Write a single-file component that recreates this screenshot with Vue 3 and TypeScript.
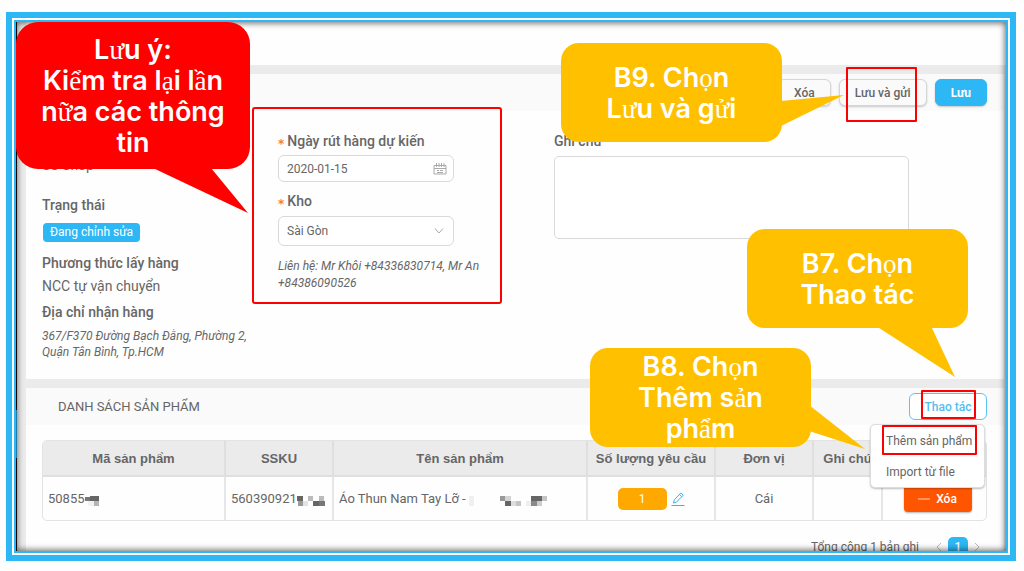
<script setup lang="ts">
import { ref } from 'vue'

interface Run { text: string; serif: boolean }
interface Callout { id: string; lines: string[]; tail: string }
interface Px { x: number; y: number; w: number; h: number; c: string }

const callouts: Callout[] = [
  { id: 'note', lines: ['Lưu ý:', 'Kiểm tra lại lần', 'nữa các thông', 'tin'], tail: '137,146 195,146 232,191' },
  { id: 'b9', lines: ['B9. Chọn', 'Lưu và gửi'], tail: '220,58 220,83 283,52' },
  { id: 'b7', lines: ['B7. Chọn', 'Thao tác'], tail: '129,97 184,97 208,148' },
  { id: 'b8', lines: ['B8. Chọn', 'Thêm sản', 'phẩm'], tail: '219,57 219,83 275,101' }
]

const marks: string[] = ['around-form', 'around-send', 'around-action', 'around-item']

function runs(line: string): Run[] {
  return line
    .split(/([ưểạầữọửảẩ]+)/)
    .filter((t) => t.length > 0)
    .map((text) => ({ text, serif: /^[ưểạầữọửảẩ]/.test(text) }))
}

const maskCode: Px[] = [
  { x: 0, y: 1, w: 5, h: 4, c: '#777' }, { x: 5, y: 0, w: 9, h: 5, c: '#666' },
  { x: 9, y: 5, w: 5, h: 5, c: '#b5b5b5' }, { x: 3, y: 5, w: 6, h: 5, c: '#f2f2f2' }
]
const maskSku: Px[] = [
  { x: 0, y: 0, w: 6, h: 5, c: '#666' }, { x: 1, y: 5, w: 5, h: 5, c: '#999' },
  { x: 6, y: 5, w: 5, h: 5, c: '#e3e3e3' }, { x: 11, y: 0, w: 5, h: 5, c: '#bbb' },
  { x: 16, y: 5, w: 6, h: 5, c: '#666' }, { x: 22, y: 0, w: 5, h: 5, c: '#bbb' },
  { x: 22, y: 5, w: 6, h: 5, c: '#777' }
]
const maskName: Px[] = [
  { x: 0, y: 0, w: 5, h: 10, c: '#f0f0f0' }, { x: 31, y: 0, w: 5, h: 5, c: '#999' },
  { x: 36, y: 0, w: 6, h: 5, c: '#d5d5d5' }, { x: 36, y: 5, w: 6, h: 5, c: '#666' },
  { x: 42, y: 5, w: 5, h: 5, c: '#ddd' }, { x: 47, y: 5, w: 5, h: 5, c: '#c4c4c4' },
  { x: 57, y: 5, w: 5, h: 5, c: '#eee' }, { x: 62, y: 0, w: 11, h: 5, c: '#666' },
  { x: 62, y: 5, w: 6, h: 5, c: '#888' }, { x: 68, y: 5, w: 5, h: 5, c: '#ccc' },
  { x: 73, y: 0, w: 5, h: 5, c: '#c4c4c4' }
]

const date = ref('2020-01-15')
const warehouse = ref('Sài Gòn')
const note = ref('')
</script>

<template>
  <div class="frame">
    <div class="screen">
      <header class="topbar"></header>
      <main class="content">
        <section class="card">
          <div class="bar">
            <button type="button" class="btn">Xóa</button>
            <button type="button" class="btn">Lưu và gửi</button>
            <button type="button" class="btn primary">Lưu</button>
          </div>
          <form class="form" @submit.prevent>
            <div class="info">
              <p class="shop">SS Shop</p>
              <h3 class="label">Trạng thái</h3>
              <span class="tag">Đang chỉnh sửa</span>
              <h3 class="label">Phương thức lấy hàng</h3>
              <p class="value">NCC tự vận chuyển</p>
              <h3 class="label">Địa chỉ nhận hàng</h3>
              <p class="small">367/F370 Đường Bạch Đằng, Phường 2, Quận Tân Bình, Tp.HCM</p>
            </div>
            <div class="fields">
              <label class="label" for="date"><span class="req">*</span>Ngày rút hàng dự kiến</label>
              <div class="control">
                <input id="date" v-model="date" type="text" />
                <svg class="cal" viewBox="0 0 14 12" width="14" height="12" fill="none" stroke="#aaa">
                  <path d="M1 2.5h12v8.5H1zM1 5.5h12M3.5 0v4M6 0v4M8.5 0v4M11 0v4M4 7.500h2M7 7.500h3M4 9.500h6" />
                </svg>
              </div>
              <label class="label" for="warehouse"><span class="req">*</span>Kho</label>
              <div class="control tall">
                <select id="warehouse" v-model="warehouse"><option>Sài Gòn</option></select>
                <svg class="chev" viewBox="0 0 10 6" width="10" height="6" fill="none" stroke="#aaa">
                  <path d="M1 .5l4 4.500 4-4.500" />
                </svg>
              </div>
              <p class="small contact">Liên hệ: Mr Khôi +84336830714, Mr An +84386090526</p>
            </div>
            <div class="notes">
              <label class="label" for="note">Ghi chú</label>
              <textarea id="note" v-model="note"></textarea>
            </div>
          </form>
        </section>

        <section class="card list">
          <div class="bar">
            <h2>DANH SÁCH SẢN PHẨM</h2>
            <div class="dropdown">
              <button type="button" class="btn action">Thao tác</button>
              <div class="menu">
                <button type="button">Thêm sản phẩm</button>
                <button type="button">Import từ file</button>
              </div>
            </div>
          </div>
          <div class="body">
            <table>
              <colgroup>
                <col class="c-code" /><col class="c-sku" /><col class="c-name" /><col class="c-qty" />
                <col class="c-unit" /><col class="c-note" /><col class="c-act" />
              </colgroup>
              <thead>
                <tr>
                  <th>Mã sản phẩm</th><th>SSKU</th><th>Tên sản phẩm</th><th>Số lượng yêu cầu</th>
                  <th>Đơn vị</th><th>Ghi chú</th><th></th>
                </tr>
              </thead>
              <tbody>
                <tr>
                  <td>50855<svg width="14" height="10"><rect v-for="(p, i) in maskCode" :key="i" :x="p.x" :y="p.y" :width="p.w" :height="p.h" :fill="p.c" /></svg></td>
                  <td>560390921<svg width="28" height="10"><rect v-for="(p, i) in maskSku" :key="i" :x="p.x" :y="p.y" :width="p.w" :height="p.h" :fill="p.c" /></svg></td>
                  <td>Áo Thun Nam Tay Lỡ - <svg width="78" height="10"><rect v-for="(p, i) in maskName" :key="i" :x="p.x" :y="p.y" :width="p.w" :height="p.h" :fill="p.c" /></svg></td>
                  <td>
                    <div class="qty">
                      <span class="count">1</span>
                      <button type="button" class="edit" aria-label="Sửa">
                        <svg viewBox="0 0 14 14" width="14" height="14" fill="none" stroke="#2db7f5">
                          <path d="M.5 13.500h13M2.500 11l.8-3.200L9.800 1l2.400 2.200-6.700 6.900zM8.400 2.500l2.300 2.200" />
                        </svg>
                      </button>
                    </div>
                  </td>
                  <td class="mid">Cái</td>
                  <td></td>
                  <td class="mid">
                    <button type="button" class="remove">
                      <svg viewBox="0 0 12 2" width="12" height="2"><path d="M0 1h12" stroke="#ffd2bb" /></svg>Xóa
                    </button>
                  </td>
                </tr>
              </tbody>
            </table>
            <nav class="pager">
              <span>Tổng cộng 1 bản ghi</span>
              <button type="button" class="arrow" aria-label="Trước">
                <svg viewBox="0 0 6 10" width="6" height="10" fill="none" stroke="#bbb"><path d="M5 1L1 5l4 4" /></svg>
              </button>
              <button type="button" class="page">1</button>
              <button type="button" class="arrow" aria-label="Sau">
                <svg viewBox="0 0 6 10" width="6" height="10" fill="none" stroke="#bbb"><path d="M1 1l4 4-4 4" /></svg>
              </button>
            </nav>
          </div>
        </section>
      </main>
      <div class="edge"></div>
      <div v-for="m in marks" :key="m" class="mark" :class="m"></div>
      <div v-for="c in callouts" :key="c.id" class="callout" :class="c.id">
        <svg class="tail" width="1" height="1"><polygon :points="c.tail" /></svg>
        <div v-for="line in c.lines" :key="line" class="line"><span v-for="(r, i) in runs(line)" :key="i" :class="{ serif: r.serif }">{{ r.text }}</span></div>
      </div>
    </div>
  </div>
</template>

<style>
body {
  margin: 0;
  background: #fefefe;
}
</style>

<style scoped>
* {
  box-sizing: border-box;
}
.frame {
  height: calc(100vh - 22px);
  margin: 12px 8px 10px 6px;
  padding: 2px;
  border: 6px solid #2db7f5;
  background: #fff;
  font-family: Roboto, "Liberation Sans", sans-serif;
  color: #666;
}
.screen {
  position: relative;
  height: 100%;
  border: 2px solid #2db7f5;
  overflow: hidden;
  background: #ebebeb;
}
.topbar {
  height: 43px;
  margin-left: 10px;
  background: #fefefe;
}
.content {
  padding: 9px 2px 0 10px;
}
.card {
  background: #fefefe;
}
.list {
  margin-top: 9px;
}
.bar {
  display: flex;
  align-items: center;
  justify-content: flex-end;
  gap: 8px;
  height: 37px;
  padding: 0 17px 0 16px;
  background: #fafafa;
}
.list .bar {
  justify-content: space-between;
}
h2 {
  margin: 0 0 0 16px;
  font-size: 13px;
  font-weight: 400;
}
.btn {
  height: 27px;
  padding: 0 15px;
  border: 1px solid #d6d6d6;
  border-radius: 6px;
  background: #fafafa;
  box-shadow: 0 1px 2px rgba(0, 0, 0, 0.2);
  font: 500 12px Roboto, sans-serif;
  color: #666;
  white-space: nowrap;
}
.btn.primary {
  min-width: 52px;
  border-color: #2db7f5;
  background: #2db7f5;
  font-weight: 700;
  color: #fff;
}
.btn.action {
  width: 78px;
  padding: 0;
  border-color: #5bc5f2;
  background: #fff;
  box-shadow: none;
  color: #4fc0f2;
}
.form {
  display: grid;
  grid-template-columns: 236fr 276fr 433fr;
  height: 268px;
  padding: 20px 17px 0 16px;
}
.label {
  display: block;
  margin: 0;
  font-size: 14px;
  font-weight: 500;
  line-height: 20px;
}
.req {
  margin-right: 3px;
  font: 700 12px/12px "DejaVu Sans", sans-serif;
  color: #ff7a33;
  vertical-align: -2px;
}
.shop {
  margin: 24px 0 20px;
  font-size: 14px;
  line-height: 20px;
}
.tag {
  display: inline-block;
  height: 19px;
  margin: 8px 0 11px 1px;
  padding: 0 7px;
  border-radius: 4px;
  background: #2db7f5;
  font-size: 12px;
  line-height: 19px;
  color: #fff;
  vertical-align: top;
}
.value {
  margin: 3px 0 6px;
  font-size: 14px;
  line-height: 20px;
}
.small {
  width: 212px;
  margin: 6px 0 0;
  font-size: 12px;
  font-style: italic;
  line-height: 16px;
}
.small.contact {
  margin-top: 12px;
  line-height: 17px;
}
.control {
  position: relative;
  width: 176px;
  margin: 4px 0 9px;
}
.control.tall {
  margin: 5px 0 0;
}
input,
select {
  display: block;
  width: 100%;
  height: 27px;
  padding: 0 28px 0 8px;
  border: 1px solid #d9d9d9;
  border-radius: 6px;
  background: #fff;
  font: 12px Roboto, sans-serif;
  color: #666;
  appearance: none;
}
select {
  height: 30px;
}
.cal {
  position: absolute;
  right: 7px;
  top: 8px;
}
.chev {
  position: absolute;
  right: 10px;
  top: 12px;
}
textarea {
  display: block;
  width: 82%;
  height: 83px;
  margin-top: 5px;
  border: 1px solid #d9d9d9;
  border-radius: 5px;
  background: #fff;
  resize: none;
}
.dropdown {
  position: relative;
}
.menu {
  position: absolute;
  top: 31px;
  right: 2px;
  z-index: 1;
  width: 115px;
  border: 1px solid #ddd;
  border-radius: 5px;
  background: #fff;
  box-shadow: 0 1px 2px rgba(0, 0, 0, 0.25);
}
.menu button {
  display: block;
  width: 100%;
  height: 31px;
  padding: 0 15px;
  border: 0;
  background: none;
  font: 12px Roboto, sans-serif;
  color: #666;
  text-align: left;
  white-space: nowrap;
}
.body {
  padding: 15px 17px 0 16px;
}
table {
  width: 100%;
  table-layout: fixed;
  border: 1px solid #e3e3e3;
  border-radius: 5px;
  border-collapse: separate;
  border-spacing: 0;
  font-size: 13px;
  overflow: hidden;
}
.c-code { width: 183px; }
.c-sku { width: 108px; }
.c-name { width: 254px; }
.c-qty { width: 128px; }
.c-unit { width: 98px; }
.c-note { width: 69px; }
.c-act { width: 103px; }
th {
  height: 36px;
  padding: 0;
  border-right: 2px solid #dfdfdf;
  border-bottom: 2px solid #dfdfdf;
  background: #ebebeb;
  font-family: "Liberation Sans", sans-serif;
  font-weight: 700;
}
td {
  height: 43px;
  padding: 0 5px;
  border-right: 2px solid #e6e6e6;
  white-space: nowrap;
}
th:last-child,
td:last-child {
  border-right: 0;
}
td > svg {
  vertical-align: -3px;
}
.mid {
  text-align: center;
}
.qty {
  display: flex;
  align-items: center;
  justify-content: center;
  gap: 4px;
}
.count {
  width: 49px;
  height: 22px;
  border-radius: 5px;
  background: #ffa800;
  font-size: 12px;
  line-height: 22px;
  text-align: center;
  color: #fff;
}
.edit {
  display: flex;
  padding: 0;
  border: 0;
  background: none;
}
.remove {
  display: inline-flex;
  align-items: center;
  justify-content: center;
  gap: 6px;
  width: 68px;
  height: 27px;
  margin-left: 6px;
  border: 0;
  border-radius: 4px;
  background: #ff5500;
  box-shadow: 0 1px 2px rgba(0, 0, 0, 0.3);
  font: 500 12px Roboto, sans-serif;
  color: #fff;
  vertical-align: middle;
}
.pager {
  display: flex;
  align-items: center;
  justify-content: flex-end;
  padding: 16px 4px 20px 0;
  font-size: 12px;
}
.pager span {
  margin-right: 14px;
}
.pager button {
  display: flex;
  align-items: center;
  justify-content: center;
  height: 20px;
  padding: 0;
  border: 0;
  background: none;
}
.pager .arrow {
  width: 12px;
}
.pager .page {
  width: 20px;
  margin: 0 3px;
  border-radius: 5px;
  background: #2db7f5;
  font: 500 12px Roboto, sans-serif;
  color: #fff;
}
.edge {
  position: absolute;
  inset: 0;
  background: linear-gradient(#000 388px, #2db7f5 388px 436px, #000 436px) left / 1px 100% no-repeat;
  box-shadow: inset 0 0 6px 1px rgba(0, 0, 0, 0.6);
  pointer-events: none;
}
.mark {
  position: absolute;
  z-index: 2;
  border: 2px solid #f00;
  border-radius: 1px;
  pointer-events: none;
}
.around-form {
  left: 236px;
  top: 85px;
  width: 250px;
  height: 197px;
  border-radius: 3px;
}
.around-send {
  right: 89px;
  top: 45px;
  width: 71px;
  height: 55px;
}
.around-action {
  right: 30px;
  top: 368px;
  width: 55px;
  height: 29px;
}
.around-item {
  right: 29px;
  top: 403px;
  width: 95px;
  height: 30px;
}
.callout {
  position: absolute;
  z-index: 3;
  display: flex;
  flex-direction: column;
  justify-content: center;
  width: 221px;
  height: 99px;
  border-radius: 18px;
  background: #ffc000;
  font: 600 27px/31px Inter, "Open Sans", sans-serif;
  color: #fff;
  text-align: center;
}
.line {
  position: relative;
  height: 31px;
  white-space: pre;
}
.serif {
  font-family: "Liberation Serif", serif;
  font-weight: 400;
  line-height: 20px;
}
.tail {
  position: absolute;
  left: 0;
  top: 0;
  overflow: visible;
  fill: #ffc000;
}
.note {
  left: 0;
  top: 0;
  width: 234px;
  height: 147px;
  border-radius: 22px;
  background: #f00;
}
.note .tail {
  fill: #f00;
}
.b9 {
  right: 224px;
  top: 21px;
}
.b7 {
  right: 38px;
  top: 207px;
}
.b8 {
  right: 195px;
  top: 326px;
}
</style>
